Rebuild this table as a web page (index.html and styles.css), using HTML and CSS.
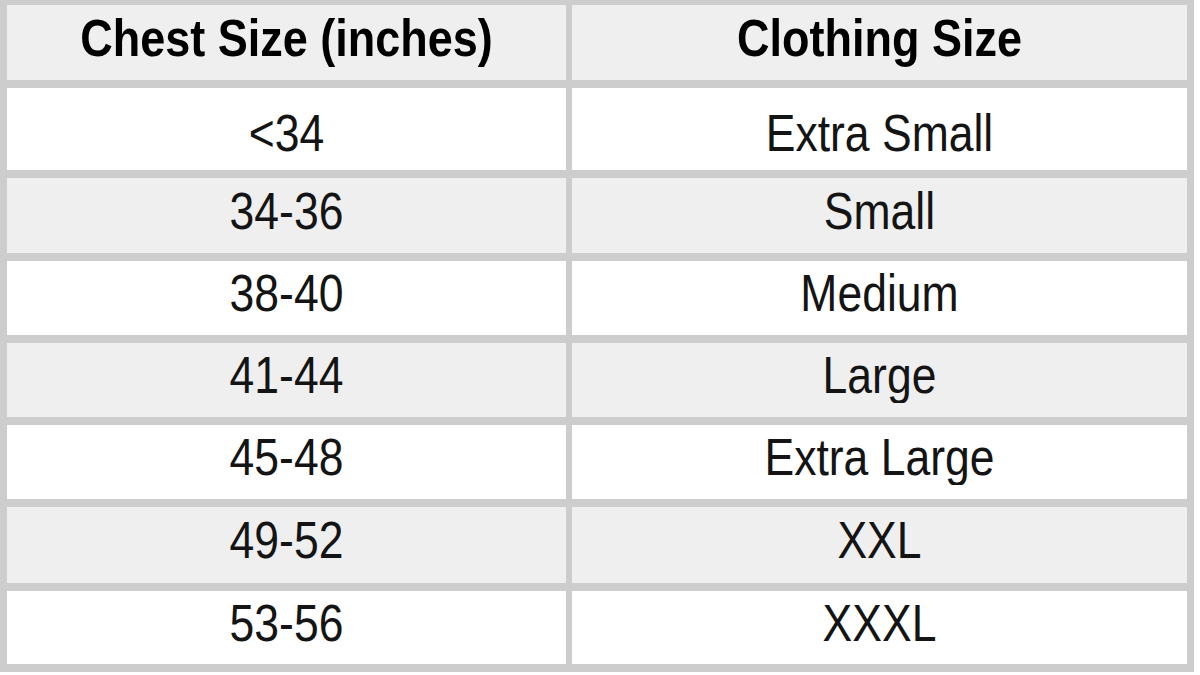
FILE: index.html
```html
<!DOCTYPE html>
<html>
<head>
<meta charset="utf-8">
<link rel="stylesheet" href="styles.css">
</head>
<body>
<div class="chart">
  <div class="cell head"><span>Chest Size (inches)</span></div>
  <div class="cell head"><span>Clothing Size</span></div>
  <div class="cell first"><span>&lt;34</span></div>
  <div class="cell first"><span>Extra Small</span></div>
  <div class="cell alt"><span>34-36</span></div>
  <div class="cell alt"><span>Small</span></div>
  <div class="cell"><span>38-40</span></div>
  <div class="cell"><span>Medium</span></div>
  <div class="cell alt"><span>41-44</span></div>
  <div class="cell alt"><span>Large</span></div>
  <div class="cell"><span>45-48</span></div>
  <div class="cell"><span>Extra Large</span></div>
  <div class="cell alt"><span>49-52</span></div>
  <div class="cell alt"><span>XXL</span></div>
  <div class="cell"><span>53-56</span></div>
  <div class="cell"><span>XXXL</span></div>
</div>
</body>
</html>
```
FILE: styles.css
```css
html, body {
  margin: 0;
  padding: 0;
  background: #ffffff;
}
body {
  width: 1200px;
  height: 675px;
  overflow: hidden;
  font-family: "Liberation Sans", Arial, sans-serif;
}
.chart {
  width: 1194px;
  height: 672px;
  box-sizing: border-box;
  background: #cdcdcd;
  padding: 5px 7px 8px 7px;
  display: grid;
  grid-template-columns: 559px 615px;
  grid-template-rows: 75px 82px 75px 74px 74px 74px 76px 73px;
  column-gap: 6px;
  row-gap: 8px;
}
.cell {
  background: #ffffff;
  display: flex;
  align-items: center;
  justify-content: center;
  font-size: 44.5px;
  color: #141414;
}
.cell span {
  display: inline-block;
  transform: scaleY(1.15);
  padding-bottom: 8px;
}
.cell.first span {
  padding-bottom: 0;
  padding-top: 8px;
}
.alt, .head {
  background: #efefef;
}
.head {
  font-weight: bold;
  font-size: 45px;
  color: #000000;
}
```
